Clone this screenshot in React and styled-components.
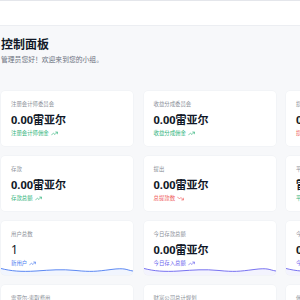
import styled, { createGlobalStyle } from "styled-components";
import { TrendingUp, TrendingDown } from "lucide-react";

const GlobalStyle = createGlobalStyle`
  html, body {
    margin: 0;
    padding: 0;
    overflow: hidden;
    background: #f7f8fa;
    font-family: "Noto Sans", "Noto Sans CJK SC", sans-serif;
  }
`;

const Page = styled.div`
  width: 300px;
  min-height: 300px;
  background: #f7f8fa;
`;

const TopBar = styled.div`
  height: 24px;
  background: #ffffff;
  border-top: 1px solid #e4e6eb;
  border-bottom: 1px solid #eceef2;
`;

const Content = styled.div`
  padding: 11px 0 0 1px;
`;

const Title = styled.h1`
  margin: 0;
  font-size: 12px;
  line-height: 16px;
  font-weight: 700;
  color: #111827;
`;

const Subtitle = styled.p`
  margin: 2px 0 0;
  font-size: 6.8px;
  line-height: 10px;
  color: #6b7280;
`;

const Grid = styled.div`
  display: grid;
  grid-template-columns: repeat(3, 132px);
  column-gap: 10.5px;
  row-gap: 10px;
  margin-top: 26px;
`;

const Card = styled.div`
  position: relative;
  box-sizing: border-box;
  height: ${(p) => (p.$short ? "54px" : "55px")};
  padding: 10px 10px 0;
  background: #ffffff;
  border-radius: 4px;
  box-shadow: 0 0 0 0.5px #eef0f3;
  overflow: hidden;
`;

const Label = styled.div`
  font-size: 5.4px;
  line-height: 7px;
  color: #8a8f98;
  white-space: nowrap;
`;

const Value = styled.div`
  margin-top: 4px;
  font-size: ${(p) => (p.$light ? "12px" : "11px")};
  line-height: 15px;
  font-weight: ${(p) => (p.$light ? 400 : 700)};
  color: #111827;
  white-space: nowrap;
`;

const Footer = styled.div`
  display: flex;
  align-items: center;
  gap: 2px;
  margin-top: 3px;
  font-size: 5.4px;
  line-height: 7px;
  color: ${(p) => p.$color};
  white-space: nowrap;
`;

const Wave = styled.svg`
  position: absolute;
  left: 0;
  bottom: 0;
  width: 100%;
  height: 9px;
`;

const colors = {
  green: "#2fb37a",
  red: "#ef5a5a",
  blue: "#4b7cf0",
  purple: "#6a63ee",
};

function Sparkline({ color }) {
  const d =
    "M0 2.5 C 10 5, 20 6, 35 5 S 60 3, 75 4.5 S 95 5.5, 110 3.5 S 125 4, 132 5";
  return (
    <Wave viewBox="0 0 132 9" preserveAspectRatio="none">
      <path d={`${d} L132 9 L0 9 Z`} fill={color} fillOpacity="0.08" />
      <path d={d} fill="none" stroke={color} strokeWidth="0.9" />
    </Wave>
  );
}

const cards = [
  { label: "注册会计师委员会", value: "0.00雷亚尔", foot: "注册会计师佣金", color: "green" },
  { label: "收益分成委员会", value: "0.00雷亚尔", foot: "收益分成佣金", color: "green" },
  { label: "损失分成委员会", value: "0.00雷亚尔", foot: "损失分成佣金", color: "red", down: true },
  { label: "存款", value: "0.00雷亚尔", foot: "存款总额", color: "green" },
  { label: "提出", value: "0.00雷亚尔", foot: "总提款数", color: "red", down: true },
  { label: "平台余额", value: "雷亚尔0.00", foot: "平台总余额", color: "green" },
  { label: "用户总数", value: "1", foot: "新用户", color: "blue", wave: true, light: true },
  { label: "今日存款总额", value: "0.00雷亚尔", foot: "今日存入总额", color: "purple", wave: true },
  { label: "今日提款总额", value: "0.00雷亚尔", foot: "今日提出总额", color: "purple", wave: true },
  { label: "雷亚尔-索取费用", value: "0.00雷亚尔", foot: "索取费用", color: "green" },
  { label: "财富公司总计规划", value: "0.00雷亚尔", foot: "总计规划", color: "green" },
  { label: "佣金总计", value: "0.00雷亚尔", foot: "佣金", color: "green" },
];

export default function App() {
  return (
    <Page>
      <GlobalStyle />
      <TopBar />
      <Content>
        <Title>控制面板</Title>
        <Subtitle>管理员您好！欢迎来到您的小组。</Subtitle>
        <Grid>
          {cards.map((c, i) => {
            const Icon = c.down ? TrendingDown : TrendingUp;
            return (
              <Card key={i} $short={c.wave}>
                <Label>{c.label}</Label>
                <Value $light={c.light}>{c.value}</Value>
                <Footer $color={colors[c.color]}>
                  {c.foot}
                  <Icon size={7} strokeWidth={2.2} />
                </Footer>
                {c.wave && <Sparkline color={colors[c.color]} />}
              </Card>
            );
          })}
        </Grid>
      </Content>
    </Page>
  );
}
